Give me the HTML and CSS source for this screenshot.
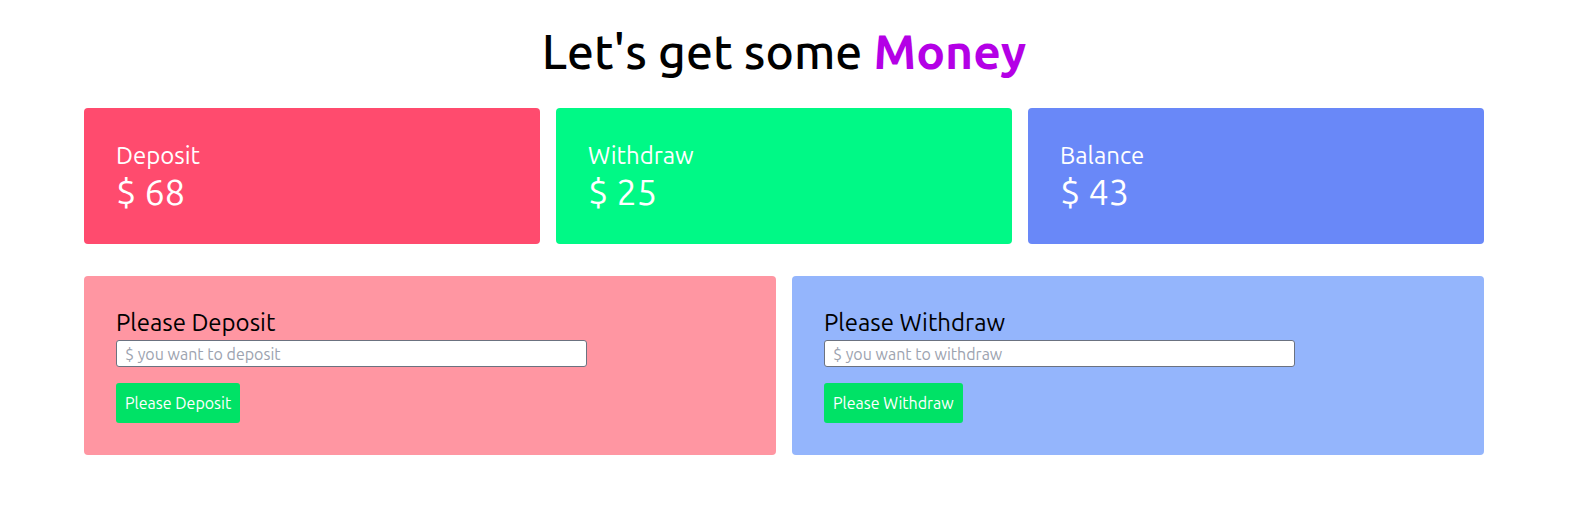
FILE: index.html
```html
<!DOCTYPE html>
<html lang="en">
<head>
<meta charset="utf-8">
<title>Let's get some Money</title>
<link rel="stylesheet" href="styles.css">
</head>
<body>
<main class="page">
  <h1 class="title">Let's get some <span class="accent">Money</span></h1>
  <section class="stats">
    <div class="stat stat-deposit">
      <div class="stat-label">Deposit</div>
      <div class="stat-value">$ 68</div>
    </div>
    <div class="stat stat-withdraw">
      <div class="stat-label">Withdraw</div>
      <div class="stat-value">$ 25</div>
    </div>
    <div class="stat stat-balance">
      <div class="stat-label">Balance</div>
      <div class="stat-value">$ 43</div>
    </div>
  </section>
  <section class="forms">
    <div class="panel panel-deposit">
      <h2 class="panel-title">Please Deposit</h2>
      <input class="field" type="text" placeholder="$ you want to deposit">
      <button class="btn" type="button">Please Deposit</button>
    </div>
    <div class="panel panel-withdraw">
      <h2 class="panel-title">Please Withdraw</h2>
      <input class="field" type="text" placeholder="$ you want to withdraw">
      <button class="btn" type="button">Please Withdraw</button>
    </div>
  </section>
</main>
</body>
</html>
```

FILE: styles.css
```css
* {
  box-sizing: border-box;
}

html, body {
  margin: 0;
  padding: 0;
  background: #ffffff;
}

body {
  font-family: "Ubuntu", "Open Sans", "Noto Sans", sans-serif;
  color: #000000;
}

.page {
  width: 1400px;
  margin-left: 84px;
}

.title {
  margin: 22px 0 28px;
  font-size: 48px;
  line-height: 58px;
  font-weight: 500;
  text-align: center;
}

.accent {
  color: #b400e6;
  font-weight: 700;
}

.stats {
  display: grid;
  grid-template-columns: repeat(3, 1fr);
  gap: 16px;
}

.stat {
  height: 136px;
  padding: 33px 32px 31px;
  border-radius: 4px;
  color: #ffffff;
}

.stat-deposit { background: #ff4b6e; }
.stat-withdraw { background: #00f986; }
.stat-balance { background: #6988f8; }

.stat-label {
  font-size: 24px;
  line-height: 29px;
}

.stat-value {
  font-size: 36px;
  line-height: 43px;
}

.forms {
  display: grid;
  grid-template-columns: repeat(2, 1fr);
  gap: 16px;
  margin-top: 32px;
}

.panel {
  padding: 32px;
  border-radius: 4px;
  display: flex;
  flex-direction: column;
  align-items: flex-start;
}

.panel-deposit { background: #ff96a2; }
.panel-withdraw { background: #94b5fc; }

.panel-title {
  margin: 0;
  font-size: 24px;
  line-height: 29px;
  font-weight: 400;
}

.field {
  margin-top: 3px;
  width: 471px;
  height: 27px;
  padding: 0 8px;
  border: 1px solid #6b7280;
  border-radius: 3px;
  background: #ffffff;
  font-family: inherit;
  font-size: 16px;
  color: #111827;
  outline: none;
}

.field::placeholder {
  color: #9ca3af;
}

.btn {
  margin-top: 16px;
  height: 40px;
  padding: 0 9px;
  border: 0;
  border-radius: 3px;
  background: #00e266;
  color: #ffffff;
  font-family: inherit;
  font-size: 16px;
  cursor: pointer;
}
```
